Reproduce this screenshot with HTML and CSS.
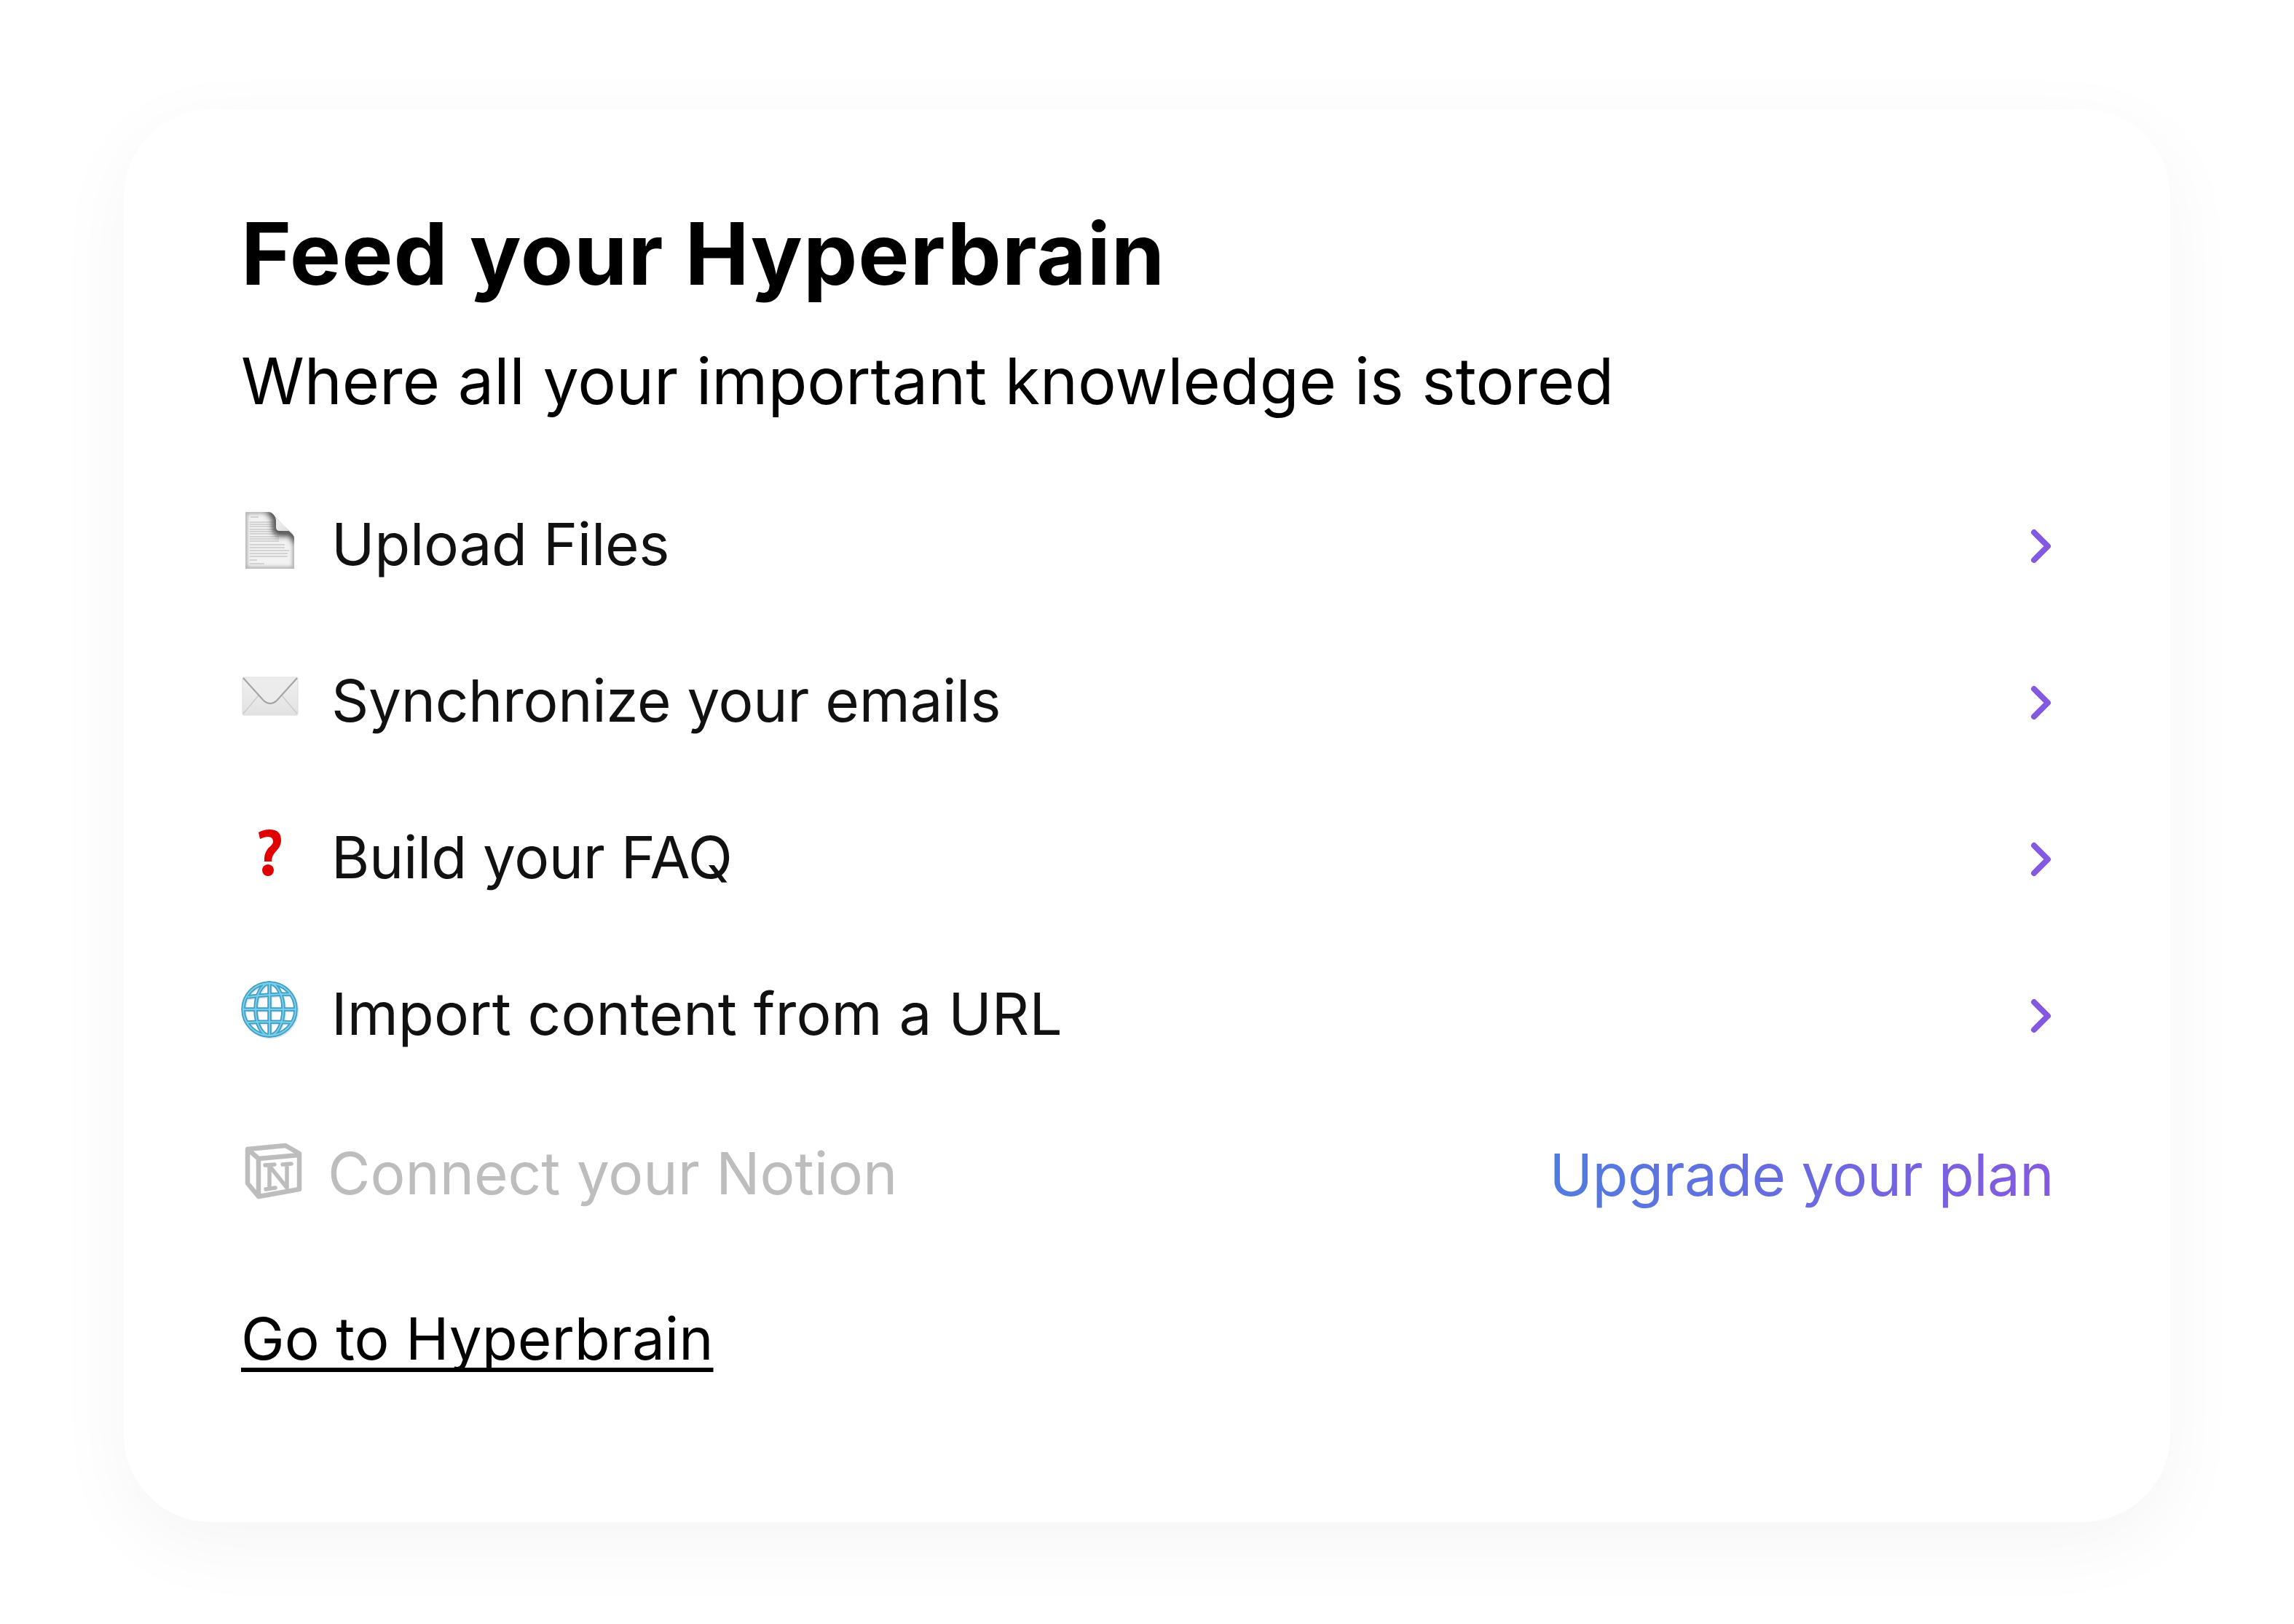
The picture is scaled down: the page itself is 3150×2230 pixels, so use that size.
FILE: index.html
```html
<!DOCTYPE html>
<html lang="en">
<head>
<meta charset="utf-8">
<title>Feed your Hyperbrain</title>
<link rel="stylesheet" href="styles.css">
</head>
<body>
<main class="card">
  <h1 class="title">Feed your Hyperbrain</h1>
  <p class="subtitle">Where all your important knowledge is stored</p>
  <ul class="rows">
    <li class="row">
      <span class="ico">
        <svg width="80" height="80" viewBox="0 0 80 80">
          <defs>
            <clipPath id="sheet"><path d="M6 1H38Q43 1 47 8L71 32Q73 34 73 38V79H6Z"/></clipPath>
            <filter id="soft" x="-30%" y="-30%" width="160%" height="160%"><feGaussianBlur stdDeviation="3.6"/></filter>
            <filter id="softer" x="-30%" y="-30%" width="160%" height="160%"><feGaussianBlur stdDeviation="2.2"/></filter>
            <linearGradient id="fold" x1="0" y1="0" x2="1" y2="1"><stop offset="0" stop-color="#f4f4f4"/><stop offset="1" stop-color="#d8d8d8"/></linearGradient>
          </defs>
          <g clip-path="url(#sheet)">
            <rect x="0" y="0" width="80" height="80" fill="#f2f2f2"/>
            <path d="M6 1V79H73V40M6 1H36" fill="none" stroke="#b4b4b4" stroke-width="6" filter="url(#softer)"/>
            <path d="M13 8H24M12 15H44M12 18H44M12 21H45M12 25H46M12 28H45M12 31H47M12 35H52M12 38H52M12 41H52M12 46H60M12 50H60M12 54H66M12 58H64M12 62H64M12 67H22M12 72H32" stroke="#b4b4b4" stroke-width="1.2" fill="none"/>
            <path d="M36 0Q46 1 48 12V22Q48 29 53 29H65Q74 29 75 42" fill="none" stroke="#333" stroke-opacity=".85" stroke-width="11" filter="url(#soft)"/>
          </g>
          <path d="M47 8L71 32Q70 27 65 27H53Q48 27 48 22V12Z" fill="url(#fold)"/>
        </svg>
      </span>
      <span class="label">Upload Files</span>
      <svg class="chev" width="30" height="48" viewBox="0 0 30 48"><path d="M5 5L24 24L5 43" fill="none" stroke="#8459e0" stroke-width="8" stroke-linecap="round" stroke-linejoin="round"/></svg>
    </li>
    <li class="row">
      <span class="ico">
        <svg width="80" height="80" viewBox="0 0 80 80">
          <defs>
            <linearGradient id="env" x1="0" y1="0" x2="0" y2="1"><stop offset="0" stop-color="#f0f0f0"/><stop offset="1" stop-color="#e2e2e2"/></linearGradient>
          </defs>
          <rect x="2" y="13" width="76" height="52" rx="2" fill="url(#env)" stroke="#dcdcdc" stroke-width="1"/>
          <path d="M24 38L3 63M56 38L77 63" stroke="#c9c9c9" stroke-width="1.2" fill="none"/>
          <path d="M3 14L31 45Q40 53 49 45L77 14" stroke="#a2a2a6" stroke-width="2" fill="#ececec"/>
        </svg>
      </span>
      <span class="label">Synchronize your emails</span>
      <svg class="chev" width="30" height="48" viewBox="0 0 30 48"><path d="M5 5L24 24L5 43" fill="none" stroke="#8459e0" stroke-width="8" stroke-linecap="round" stroke-linejoin="round"/></svg>
    </li>
    <li class="row">
      <span class="ico">
        <svg width="80" height="80" viewBox="0 0 80 80">
          <path d="M24 11Q31 7 39 7Q55 7 55 22Q55 30 48 37Q42 43 42 51H32Q31 41 37 33Q44 27 44 24Q44 17 37 17Q32 17 26 20Z" fill="#e00000"/>
          <circle cx="37" cy="63" r="8" fill="#e00000"/>
        </svg>
      </span>
      <span class="label">Build your FAQ</span>
      <svg class="chev" width="30" height="48" viewBox="0 0 30 48"><path d="M5 5L24 24L5 43" fill="none" stroke="#8459e0" stroke-width="8" stroke-linecap="round" stroke-linejoin="round"/></svg>
    </li>
    <li class="row">
      <span class="ico">
        <svg width="80" height="80" viewBox="0 0 80 80">
          <defs>
            <g id="mesh">
              <circle cx="39" cy="39" r="36"/>
              <ellipse cx="39" cy="39" rx="19" ry="36"/>
              <path d="M39 3V75M3 39H75M9 22Q39 18 69 18M9 57Q39 55 69 57"/>
            </g>
          </defs>
          <g fill="none">
            <use href="#mesh" stroke="#dfe6ea" stroke-width="5.5" transform="translate(1.5 1.5)"/>
            <use href="#mesh" stroke="#3f9ec4" stroke-width="5.5"/>
            <use href="#mesh" stroke="#76d0ea" stroke-width="2"/>
          </g>
        </svg>
      </span>
      <span class="label label-wide">Import content from a URL</span>
      <svg class="chev" width="30" height="48" viewBox="0 0 30 48"><path d="M5 5L24 24L5 43" fill="none" stroke="#8459e0" stroke-width="8" stroke-linecap="round" stroke-linejoin="round"/></svg>
    </li>
    <li class="row row-locked">
      <span class="ico ico-notion">
        <svg width="84" height="80" viewBox="0 0 84 80">
          <g fill="none" stroke="#bdbdbd" stroke-width="6.5" stroke-linejoin="round">
            <path d="M9 9L61 4L80 15V64L24 74L9 56Z"/>
            <path d="M9 9L24 22L80 17M24 22V74"/>
          </g>
          <path d="M33 31L46 30M39 31V62M39 32L63 62V30M57 30L69 29M34 64L47 62" fill="none" stroke="#bdbdbd" stroke-width="5.5" stroke-linecap="round" stroke-linejoin="round"/>
        </svg>
      </span>
      <span class="label label-muted">Connect your Notion</span>
      <a class="upgrade">Upgrade your plan</a>
    </li>
  </ul>
  <a class="goto">Go to Hyperbrain</a>
</main>
</body>
</html>
```

FILE: styles.css
```css
* { box-sizing: border-box; }
html, body { margin: 0; background: #fff; }
body { width: 3150px; height: 2230px; padding: 150px 170px 140px; overflow: hidden; font-family: "Inter", sans-serif; color: #000; }
.card { height: 1940px; border-radius: 120px; background: #fff; padding: 128px 162px 0 161px; box-shadow: 0 30px 110px rgba(0, 0, 0, .045); }
.title { margin: 0; font-family: "Inter", sans-serif; font-weight: 700; font-size: 118px; line-height: 140px; letter-spacing: 1px; }
.subtitle { margin: 50px 0 0; font-size: 88px; line-height: 110px; letter-spacing: 0; font-weight: 400; }
.rows { list-style: none; margin: 62px 0 0; padding: 0; display: flex; flex-direction: column; }
.row { height: 215px; display: flex; align-items: center; gap: 44px; }
.row-locked { height: 222px; gap: 35px; }
.ico { width: 80px; height: 80px; flex: none; display: block; margin-top: -12px; }
.ico-notion { width: 84px; margin-top: -4px; }
.ico svg { display: block; }
.label { flex: 1; font-size: 80px; line-height: 100px; font-weight: 400; color: #111; letter-spacing: -0.3px; margin-top: -2px; }
.label-wide { letter-spacing: 0.15px; }
.label-muted { color: #bdbdbd; letter-spacing: 0; margin-top: 0; }
.chev { flex: none; position: relative; top: 2px; }
.upgrade { font-size: 80px; line-height: 100px; letter-spacing: -0.6px; background: linear-gradient(90deg, #4f7ce0, #8559e0); -webkit-background-clip: text; background-clip: text; color: transparent; margin-right: -2px; position: relative; top: 2px; }
.goto { display: inline-block; margin-top: 66px; font-size: 80px; line-height: 100px; color: #000; text-decoration: underline; text-decoration-thickness: 6px; text-underline-offset: 11px; text-decoration-skip-ink: none; }
```
